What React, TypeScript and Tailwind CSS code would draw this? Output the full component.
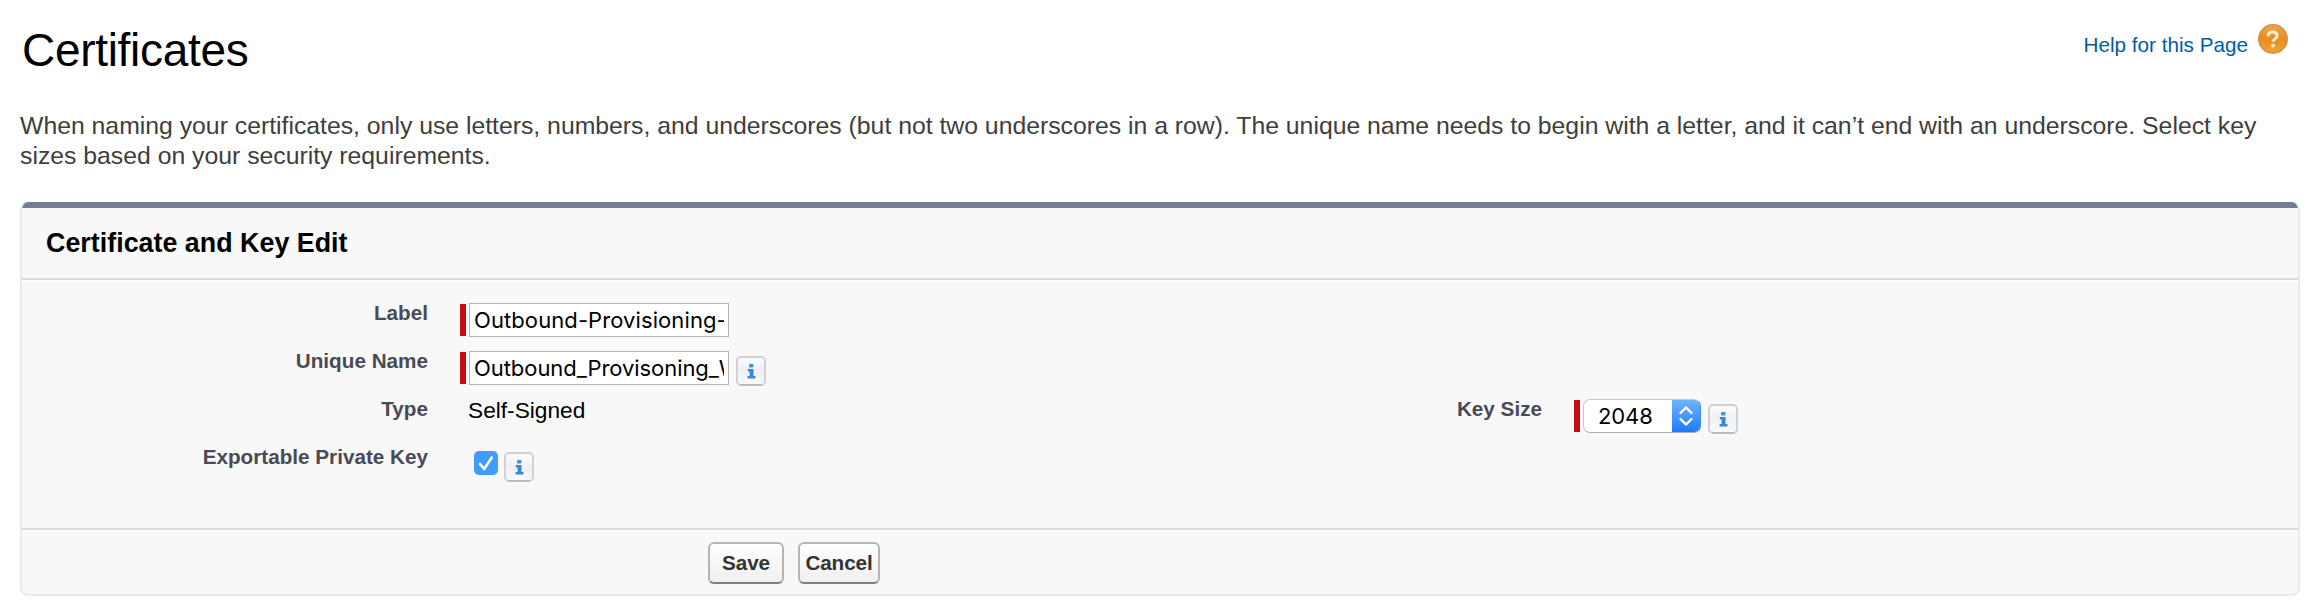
import React from "react";

function InfoIcon({ className = "" }: { className?: string }) {
  return (
    <svg className={`block h-[30px] w-[30px] shrink-0 ${className}`} viewBox="0 0 30 30">
      <defs>
        <linearGradient id="info" x1="0" y1="0" x2="0" y2="1">
          <stop offset="0" stopColor="#fcfcfd" />
          <stop offset="0.5" stopColor="#eef0f4" />
          <stop offset="1" stopColor="#f9fafb" />
        </linearGradient>
      </defs>
      <rect x="1" y="1" width="28" height="28" rx="4" fill="url(#info)" stroke="#d2d2d2" strokeWidth="2" />
      <path d="M4 29H26" stroke="#bdbdbd" strokeWidth="2" />
      <rect x="13" y="8" width="4.500" height="3.400" rx="0.8" fill="#4a90d9" />
      <path d="M11.800 13h5.700v7h1.900v2.400h-7.800V20h2v-4.600h-1.800z" fill="#3d85d3" />
    </svg>
  );
}

function HelpIcon() {
  return (
    <svg className="block h-[30px] w-[30px] shrink-0" viewBox="0 0 30 30">
      <defs>
        <linearGradient id="help" x1="0" y1="0" x2="0" y2="1">
          <stop offset="0" stopColor="#eda846" />
          <stop offset="0.5" stopColor="#e88d1c" />
          <stop offset="1" stopColor="#f0a63c" />
        </linearGradient>
      </defs>
      <circle cx="15" cy="15" r="14.300" fill="url(#help)" stroke="#cc9450" strokeWidth="1.400" />
      <path d="M10.200 12.200c0-2.800 2-4.200 4.500-4.200s4.400 1.400 4.400 3.700c0 3-4 3.200-4 6.100" fill="none" stroke="#fdeedb" strokeWidth="3" />
      <circle cx="15" cy="21.600" r="1.900" fill="#fdeedb" />
    </svg>
  );
}

function Label({ children, className }: { children: React.ReactNode; className: string }) {
  return (
    <div className={`shrink-0 text-right text-[20.700px] leading-[24px] font-bold whitespace-nowrap text-[#4a4a56] ${className}`}>
      {children}
    </div>
  );
}

function TextField({ value, className }: { value: string; className: string }) {
  return (
    <div className="flex h-[34px] items-center gap-[3px]">
      <span className="h-8 w-1.5 bg-[#c60a16]" />
      <input
        className={`h-[34px] w-[260px] border border-[#b5b5b5] bg-white pr-1 pl-1 font-[Inter,sans-serif] text-[22px] text-black outline-none ${className}`}
        defaultValue={value}
      />
    </div>
  );
}

function Button({ children, className }: { children: React.ReactNode; className: string }) {
  return (
    <button
      className={`flex h-[42px] items-center justify-center rounded-[6px] border-2 border-[#b5b5b5] border-b-[#7f7f7f] bg-linear-to-b from-white to-[#efefef] text-[20.700px] leading-6 font-bold text-[#333] ${className}`}
    >
      {children}
    </button>
  );
}

export default function App() {
  return (
    <main className="h-[616px] w-[2322px] overflow-hidden bg-white font-['Liberation_Sans',Arial,sans-serif]">
      <header className="flex h-[111px] items-start justify-between pr-[34px] pl-[22px]">
        <h1 className="pt-[24px] text-[46px] leading-[52px] tracking-[-0.300px] text-black">Certificates</h1>
        <div className="flex pt-6">
          <a className="mr-[10px] pt-[9px] text-[20.700px] leading-6 whitespace-nowrap text-[#015ba7]">Help for this Page</a>
          <HelpIcon />
        </div>
      </header>
      <p className="h-[91px] pl-5 text-[24.800px] leading-[30px] tracking-[-0.015px] whitespace-nowrap text-[#3e3e3c]">
        When naming your certificates, only use letters, numbers, and underscores (but not two underscores in a row). The unique name needs to begin with a letter, and it can’t end with an underscore. Select key
        <br />
        sizes based on your security requirements.
      </p>
      <section className="ml-5 flex h-[394px] w-[2280px] flex-col overflow-hidden rounded-[8px] border-x-2 border-b-2 border-[#eaeaea] bg-[#f8f8f8]">
        <div className="h-1.5 shrink-0 bg-[#747e96]" />
        <div className="h-[72px] shrink-0 border-b-2 border-[#dbdbdb] pt-[20px] pl-6 text-[26.800px] leading-[30px] font-bold tracking-[0.030px] text-black">
          Certificate and Key Edit
        </div>
        <div className="h-[250px] shrink-0 border-t-2 border-b-2 border-t-white border-b-[#dbdbdb] pt-[19px]">
          <div className="flex h-12">
            <Label className="w-[406px]">Label</Label>
            <div className="pt-[2px] pl-8">
              <TextField value="Outbound-Provisioning-WD" className="tracking-[0.090px]" />
            </div>
          </div>
          <div className="flex h-12">
            <Label className="w-[406px]">Unique Name</Label>
            <div className="flex pt-[2px] pl-8">
              <TextField value="Outbound_Provisoning_WD" className="tracking-[-0.060px]" />
              <InfoIcon className="mt-[5px] ml-[7px]" />
            </div>
          </div>
          <div className="flex h-12">
            <Label className="w-[406px]">Type</Label>
            <div className="w-[500px] pl-10 text-[22.700px] leading-[26px] text-black">Self-Signed</div>
            <Label className="w-[614px]">Key Size</Label>
            <div className="flex pt-[2px] pl-8">
              <span className="mt-px h-8 w-1.5 bg-[#c60a16]" />
              <div className="ml-[3px] flex h-[34px] w-[118px] overflow-hidden rounded-[7px] border border-[#c9c9c9] border-r-[#3c8df8] border-b-[#adadad] bg-white">
                <span className="w-[88px] pl-[14px] font-[Inter,sans-serif] text-[22px] leading-[32px] tracking-[-0.100px] text-black">2048</span>
                <span className="flex flex-1 items-center justify-center bg-linear-to-b from-[#6cb3fa] to-[#1a7bfb]">
                  <svg className="h-5 w-4" viewBox="0 0 16 20" fill="none" stroke="#fff" strokeWidth="2.4" strokeLinecap="round" strokeLinejoin="round">
                    <path d="M2.500 7 8 1.500 13.500 7M2.500 13 8 18.500 13.500 13" />
                  </svg>
                </span>
              </div>
              <InfoIcon className="mt-[5px] ml-[7px]" />
            </div>
          </div>
          <div className="flex h-12">
            <Label className="w-[406px]">Exportable Private Key</Label>
            <div className="flex pl-[46px]">
              <span className="mt-[6px] flex h-6 w-6 items-center justify-center rounded-[5px] bg-[#3f9bfc]">
                <svg className="h-6 w-6" viewBox="0 0 24 24" fill="none" stroke="#fff" strokeWidth="2.600" strokeLinecap="round" strokeLinejoin="round">
                  <path d="M6 13 10.200 18 17.800 6.500" />
                </svg>
              </span>
              <InfoIcon className="mt-[7px] ml-[6px]" />
            </div>
          </div>
        </div>
        <div className="flex flex-1 gap-[14px] border-t-2 border-white pt-[10px] pl-[686px]">
          <Button className="w-[76px] tracking-[-0.100px]">Save</Button>
          <Button className="w-[82px] tracking-[-0.100px]">Cancel</Button>
        </div>
      </section>
    </main>
  );
}
